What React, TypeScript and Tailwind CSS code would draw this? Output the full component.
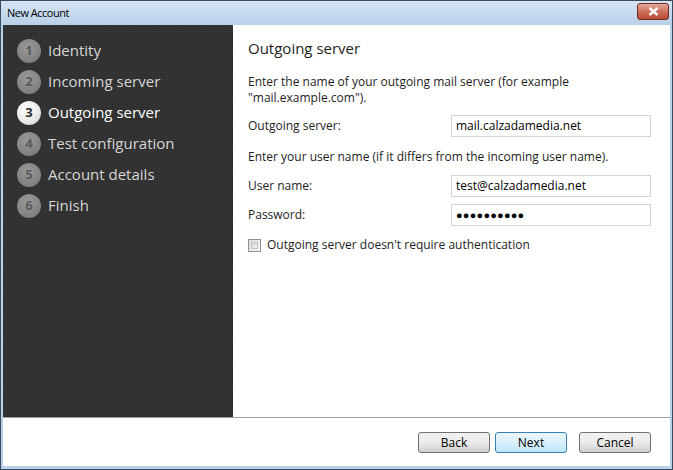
import React from 'react'

const steps = [
  'Identity',
  'Incoming server',
  'Outgoing server',
  'Test configuration',
  'Account details',
  'Finish',
]
const active = 2

function Field({ label, value, password }: { label: string; value: string; password?: boolean }) {
  return (
    <div className="flex items-center">
      <span className="w-[203px] text-[12px] text-[#1e1e1e]">{label}</span>
      <div className="w-[200px] h-[22px] border border-[#d4d4d4] bg-white flex items-center pl-[4px] text-[12px] text-black">
        {password ? <span className="tracking-[0.2px] text-[11px]">{'●●●●●●●●●●'}</span> : value}
      </div>
    </div>
  )
}

function Btn({ label, focused }: { label: string; focused?: boolean }) {
  return (
    <div
      className={
        'w-[72px] h-[21px] rounded-[3px] border flex items-center justify-center text-[12px] text-black bg-gradient-to-b ' +
        (focused
          ? 'border-[#3c7fb1] from-[#eaf6fd] via-[#d9f0fc] to-[#bee6fd]'
          : 'border-[#707070] from-[#f2f2f2] via-[#ebebeb] to-[#cfcfcf]')
      }
    >
      {label}
    </div>
  )
}

export default function App() {
  return (
    <div className="w-[673px] h-[470px] flex flex-col bg-[#b9d1ea] border border-[#3a4b5c] font-['Open_Sans','Noto_Sans',sans-serif] overflow-hidden">
      {/* title bar */}
      <div className="h-[24px] shrink-0 flex items-center justify-between pl-[6px] pr-[3px] bg-gradient-to-b from-[#d5e4f3] to-[#b9d0ea]">
        <span className="text-[11px] tracking-[-0.5px] text-black">New Account</span>
        <div className="w-[32px] h-[17px] mb-[3px] rounded-[3px] border border-[#6d2d22] bg-gradient-to-b from-[#e3ab9d] via-[#cc6e5a] to-[#bb4a35] flex items-center justify-center">
          <svg width="11" height="9" viewBox="0 0 11 9">
            <path d="M1.5 1 L9.5 8 M9.5 1 L1.5 8" stroke="#fff" strokeWidth="2.4" />
          </svg>
        </div>
      </div>

      {/* body */}
      <div className="flex-1 flex flex-col mx-[2px] mb-[3px] bg-white">
        <div className="h-[392px] flex">
          <div className="w-[230px] bg-[#333333] bg-[radial-gradient(#2a2a2a_1px,transparent_1px)] bg-[length:3px_3px] pt-[10px] pl-[14px]">
            {steps.map((s, i) => (
              <div key={s} className="h-[31px] flex items-center gap-[7px]">
                <div
                  className={
                    'w-[24px] h-[24px] rounded-full flex items-center justify-center text-[13px] font-bold ' +
                    (i === active
                      ? 'bg-[radial-gradient(circle_at_40%_35%,#ffffff,#e8e8e8_60%,#bdbdbd)] text-[#2d2d2d]'
                      : 'bg-[radial-gradient(circle_at_45%_35%,#9a9a9a,#808080_70%,#6e6e6e)] text-[#5a5a5a]')
                  }
                >
                  {i + 1}
                </div>
                <span className={'text-[15px] ' + (i === active ? 'text-white' : 'text-[#d6d6d6]')}>{s}</span>
              </div>
            ))}
          </div>

          <div className="flex-1 flex flex-col pl-[15px] pt-[12px]">
            <div className="text-[15px] leading-[22px] text-[#1e1e1e]">Outgoing server</div>
            <p className="mt-[15px] text-[12px] leading-[16px] text-[#1e1e1e] w-[360px]">
              Enter the name of your outgoing mail server (for example "mail.example.com").
            </p>
            <div className="mt-[9px]">
              <Field label="Outgoing server:" value="mail.calzadamedia.net" />
            </div>
            <p className="mt-[12px] text-[12px] leading-[16px] text-[#1e1e1e]">
              Enter your user name (if it differs from the incoming user name).
            </p>
            <div className="mt-[10px]">
              <Field label="User name:" value="test@calzadamedia.net" />
            </div>
            <div className="mt-[7px]">
              <Field label="Password:" value="" password />
            </div>
            <div className="mt-[11px] flex items-center gap-[6px] h-[16px]">
              <div className="w-[13px] h-[13px] border border-[#8f8f8f] bg-gradient-to-br from-[#dcdcdc] to-[#f8f8f8] p-[2px]">
                <div className="w-full h-full border border-[#c4c4c4] bg-gradient-to-br from-[#d0d0d0] to-[#f4f4f4]" />
              </div>
              <span className="text-[12px] text-[#1e1e1e]">Outgoing server doesn't require authentication</span>
            </div>
          </div>
        </div>
        <div className="h-px bg-[#a0a0a0]" />
        <div className="flex-1 flex items-start justify-end pt-[14px] pr-[19px]">
          <Btn label="Back" />
          <div className="ml-[5px]">
            <Btn label="Next" focused />
          </div>
          <div className="ml-[12px]">
            <Btn label="Cancel" />
          </div>
        </div>
      </div>
    </div>
  )
}
